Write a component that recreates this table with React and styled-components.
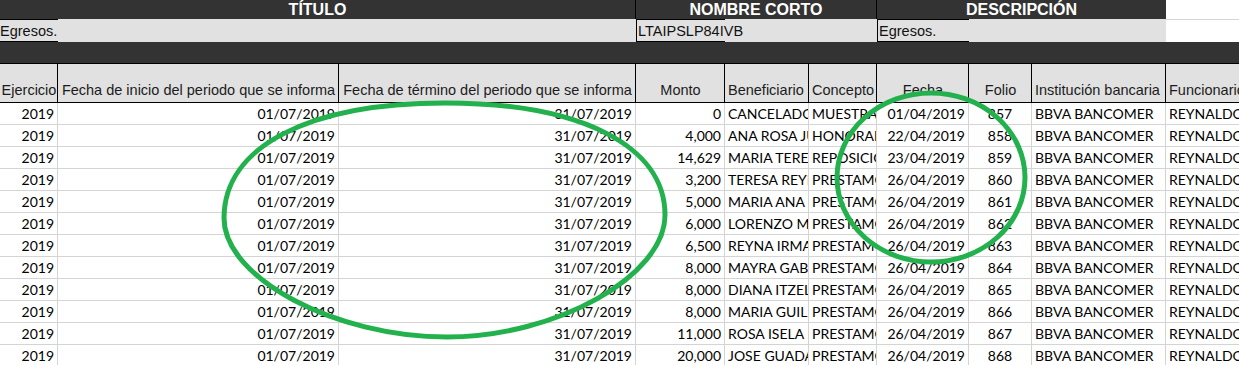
import React from "react";
import styled, { createGlobalStyle } from "styled-components";

const Global = createGlobalStyle`
  html, body { margin: 0; padding: 0; background: #ffffff; overflow: hidden; }
  #root { width: 1239px; height: 365px; overflow: hidden; position: relative; }
`;

const COLS = [
  { w: 58, align: "right", head: "Ejercicio" },
  { w: 281, align: "right", head: "Fecha de inicio del periodo que se informa" },
  { w: 297, align: "right", head: "Fecha de término del periodo que se informa" },
  { w: 89, align: "right", head: "Monto" },
  { w: 84, align: "left", head: "Beneficiario" },
  { w: 68, align: "left", head: "Concepto" },
  { w: 92, align: "right", head: "Fecha" },
  { w: 63, align: "center", head: "Folio" },
  { w: 134, align: "left", head: "Institución bancaria" },
  { w: 140, align: "left", head: "Funcionario que autoriza" },
];

const ROWS = [
  ["0", "CANCELADO", "MUESTRA DE", "01/04/2019", "857"],
  ["4,000", "ANA ROSA JUAREZ", "HONORARIOS", "22/04/2019", "858"],
  ["14,629", "MARIA TERESA LOPEZ", "REPOSICION", "23/04/2019", "859"],
  ["3,200", "TERESA REYES", "PRESTAMO", "26/04/2019", "860"],
  ["5,000", "MARIA ANA\u00a0\u00a0\u00a0TORRES", "PRESTAMO", "26/04/2019", "861"],
  ["6,000", "LORENZO MARTINEZ", "PRESTAMO", "26/04/2019", "862"],
  ["6,500", "REYNA IRMA SALAZAR", "PRESTAMO", "26/04/2019", "863"],
  ["8,000", "MAYRA GABRIELA", "PRESTAMO", "26/04/2019", "864"],
  ["8,000", "DIANA ITZEL RAMIREZ", "PRESTAMO", "26/04/2019", "865"],
  ["8,000", "MARIA GUILLERMINA", "PRESTAMO", "26/04/2019", "866"],
  ["11,000", "ROSA ISELA MENDEZ", "PRESTAMO", "26/04/2019", "867"],
  ["20,000", "JOSE GUADALUPE", "PRESTAMO", "26/04/2019", "868"],
];

const Sheet = styled.div`
  width: 1380px;
  display: flex;
  flex-direction: column;
  font-family: "Liberation Sans", Arial, sans-serif;
  color: #000;
`;

const TitleRow = styled.div`
  display: flex;
  height: 19px;
`;

const TitleCell = styled.div`
  box-sizing: border-box;
  width: ${(p) => p.$w}px;
  flex: none;
  background: #333333;
  color: #ffffff;
  font-weight: bold;
  font-size: 16px;
  line-height: 19px;
  text-align: center;
  border-right: ${(p) => (p.$edge ? "1px solid #000" : "none")};
  overflow: hidden;
  white-space: nowrap;
`;

const Blank = styled.div`
  flex: 1;
  background: #ffffff;
  box-sizing: border-box;
  border-top: ${(p) => (p.$line ? "1px solid #d4d4d4" : "none")};
`;

const InfoRow = styled.div`
  display: flex;
  height: 23px;
`;

const InfoCell = styled.div`
  box-sizing: border-box;
  width: ${(p) => p.$w}px;
  flex: none;
  background: #e1e1e1;
  font-size: 14.5px;
  line-height: 21px;
  padding-top: 1px;
  white-space: nowrap;
  overflow: visible;
  color: #111;
  border-top: 1px solid ${(p) => (p.$boxed ? "#000" : "#e1e1e1")};
  border-bottom: 1px solid ${(p) => (p.$boxed ? "#000" : "#e1e1e1")};
  border-left: ${(p) => (p.$left ? "1px solid #000" : "none")};
  padding-left: ${(p) => (p.$left ? 1 : 0)}px;
  position: relative;
  z-index: ${(p) => (p.$boxed ? 1 : 0)};
`;

const DarkRow = styled.div`
  height: 21px;
  background: #333333;
`;

const HeaderRow = styled.div`
  display: flex;
  height: 40px;
  box-sizing: border-box;
  border-top: 1px solid #000;
  border-bottom: 1px solid #000;
`;

const HeadCell = styled.div`
  box-sizing: border-box;
  width: ${(p) => p.$w}px;
  flex: none;
  background: #e1e1e1;
  border-right: 1px solid #000;
  display: flex;
  align-items: flex-end;
  justify-content: ${(p) => (p.$align === "left" ? "flex-start" : "center")};
  padding: 0 2px 3px 3px;
  font-size: 14.5px;
  line-height: 17px;
  color: #1c1c1c;
  white-space: nowrap;
  overflow: hidden;
`;

const DataRow = styled.div`
  display: flex;
  height: 22px;
`;

const DataCell = styled.div`
  box-sizing: border-box;
  width: ${(p) => p.$w}px;
  flex: none;
  border-right: 1px solid #d4d4d4;
  border-bottom: 1px solid #d4d4d4;
  font-family: Lato, "Open Sans", sans-serif;
  font-size: 14px;
  line-height: 21px;
  text-align: ${(p) => p.$align};
  padding: 0 3px 0 3px;
  white-space: nowrap;
  overflow: hidden;
  text-overflow: clip;
  color: #000;
`;

const Overlay = styled.svg`
  position: absolute;
  left: 0;
  top: 0;
  width: 1239px;
  height: 365px;
  pointer-events: none;
`;

const Mark = styled.path`
  fill: none;
  stroke: #22b14c;
  stroke-width: 5;
`;

const MarkEllipse = styled.ellipse`
  fill: none;
  stroke: #22b14c;
  stroke-width: 5;
`;

export default function App() {
  return (
    <>
      <Global />
      <Sheet>
        <TitleRow>
          <TitleCell $w={636} $edge>TÍTULO</TitleCell>
          <TitleCell $w={241} $edge>NOMBRE CORTO</TitleCell>
          <TitleCell $w={289}>DESCRIPCIÓN</TitleCell>
          <Blank />
        </TitleRow>
        <InfoRow>
          <InfoCell $w={58} $boxed>Egresos.</InfoCell>
          <InfoCell $w={578} />
          <InfoCell $w={89} $boxed $left>LTAIPSLP84IVB</InfoCell>
          <InfoCell $w={152} />
          <InfoCell $w={92} $boxed $left>Egresos.</InfoCell>
          <InfoCell $w={197} />
          <Blank $line />
        </InfoRow>
        <DarkRow />
        <HeaderRow>
          {COLS.map((c) => (
            <HeadCell key={c.head} $w={c.w} $align={c.align === "left" ? "left" : "center"}>
              {c.head}
            </HeadCell>
          ))}
        </HeaderRow>
        {ROWS.map((r, i) => {
          const vals = ["2019", "01/07/2019", "31/07/2019", r[0], r[1], r[2], r[3], r[4], "BBVA BANCOMER", "REYNALDO GARCIA"];
          return (
            <DataRow key={i}>
              {COLS.map((c, j) => (
                <DataCell key={j} $w={c.w} $align={c.align}>
                  {vals[j]}
                </DataCell>
              ))}
            </DataRow>
          );
        })}
      </Sheet>
      <Overlay viewBox="0 0 1239 365">
        <Mark d="M 445 103 C 581 103, 665 146, 665 215 C 665 276, 556 337, 447 337 C 335 337, 224 278, 224 218 C 224 147, 308 103, 445 103 Z" />
        <MarkEllipse cx="931" cy="177.5" rx="94" ry="84.5" />
      </Overlay>
    </>
  );
}
